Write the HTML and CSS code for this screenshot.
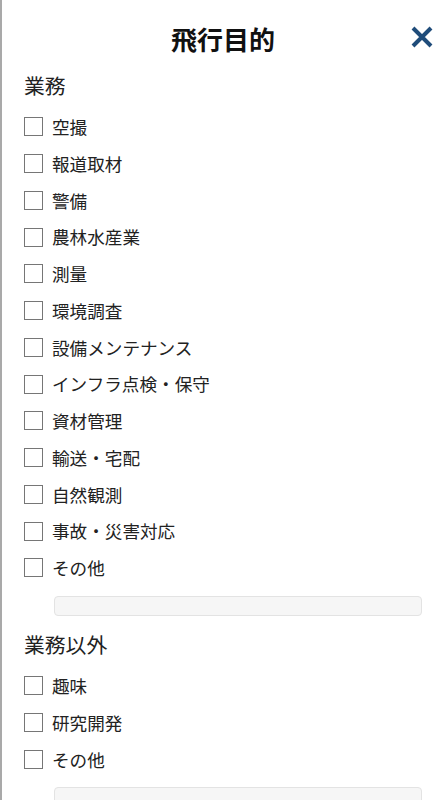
FILE: index.html
```html
<!DOCTYPE html>
<html lang="ja">
<head>
<meta charset="utf-8">
<link rel="stylesheet" href="styles.css">
</head>
<body>
<div class="panel">
  <header class="head">
    <span></span>
    <h1 class="title">飛行目的</h1>
    <button class="close" aria-label="閉じる">
      <svg width="22" height="22" viewBox="0 0 22 22"><path d="M2 2 L20 20 M20 2 L2 20" stroke="#1f4c7a" stroke-width="4" stroke-linecap="butt" fill="none"/></svg>
    </button>
  </header>

  <h2 class="sec">業務</h2>
  <ul class="list">
    <li class="row"><span class="box"></span><span class="lbl">空撮</span></li>
    <li class="row"><span class="box"></span><span class="lbl">報道取材</span></li>
    <li class="row"><span class="box"></span><span class="lbl">警備</span></li>
    <li class="row"><span class="box"></span><span class="lbl">農林水産業</span></li>
    <li class="row"><span class="box"></span><span class="lbl">測量</span></li>
    <li class="row"><span class="box"></span><span class="lbl">環境調査</span></li>
    <li class="row"><span class="box"></span><span class="lbl">設備メンテナンス</span></li>
    <li class="row"><span class="box"></span><span class="lbl">インフラ点検・保守</span></li>
    <li class="row"><span class="box"></span><span class="lbl">資材管理</span></li>
    <li class="row"><span class="box"></span><span class="lbl">輸送・宅配</span></li>
    <li class="row"><span class="box"></span><span class="lbl">自然観測</span></li>
    <li class="row"><span class="box"></span><span class="lbl">事故・災害対応</span></li>
    <li class="row"><span class="box"></span><span class="lbl">その他</span></li>
  </ul>
  <div class="other"><span class="field"></span></div>

  <h2 class="sec">業務以外</h2>
  <ul class="list">
    <li class="row"><span class="box"></span><span class="lbl">趣味</span></li>
    <li class="row"><span class="box"></span><span class="lbl">研究開発</span></li>
    <li class="row"><span class="box"></span><span class="lbl">その他</span></li>
  </ul>
  <div class="other"><span class="field"></span></div>
</div>
</body>
</html>
```

FILE: styles.css
```css
html, body {
  margin: 0;
  padding: 0;
  background: #fff;
}
body {
  font-family: "Noto Sans CJK JP", "Noto Sans", sans-serif;
  color: #222;
}
.panel {
  border-left: 2px solid #a9a9a9;
  min-height: 800px;
  box-sizing: border-box;
  padding-left: 22px;
  padding-right: 23px;
}
.head {
  height: 71px;
  padding-top: 6px;
  box-sizing: border-box;
  display: grid;
  grid-template-columns: 1fr auto 1fr;
  align-items: center;
}
.title {
  margin: 0;
  font-size: 26px;
  font-weight: 700;
  color: #111;
  line-height: 1;
}
.close {
  justify-self: end;
  border: 0;
  background: none;
  padding: 0;
  margin: 0 -11px 4px 0;
  width: 22px;
  height: 22px;
  display: flex;
}
.sec {
  margin: 0 0 9.6px;
  font-size: 20.8px;
  font-weight: 400;
  line-height: 28px;
  color: #222;
}
.list {
  list-style: none;
  margin: 0;
  padding: 0;
}
.row {
  height: 36.75px;
  display: flex;
  align-items: center;
  gap: 9px;
}
.box {
  width: 19px;
  height: 19px;
  box-sizing: border-box;
  border: 1px solid #767676;
  background: #fff;
  flex: none;
}
.lbl {
  font-size: 17.6px;
  line-height: 1;
  color: #222;
}
.other {
  padding: 9.6px 0 14px 30px;
}
.field {
  display: block;
  height: 20px;
  box-sizing: border-box;
  border: 1px solid #e3e3e3;
  border-radius: 4px;
  background: #f6f6f6;
}
```
